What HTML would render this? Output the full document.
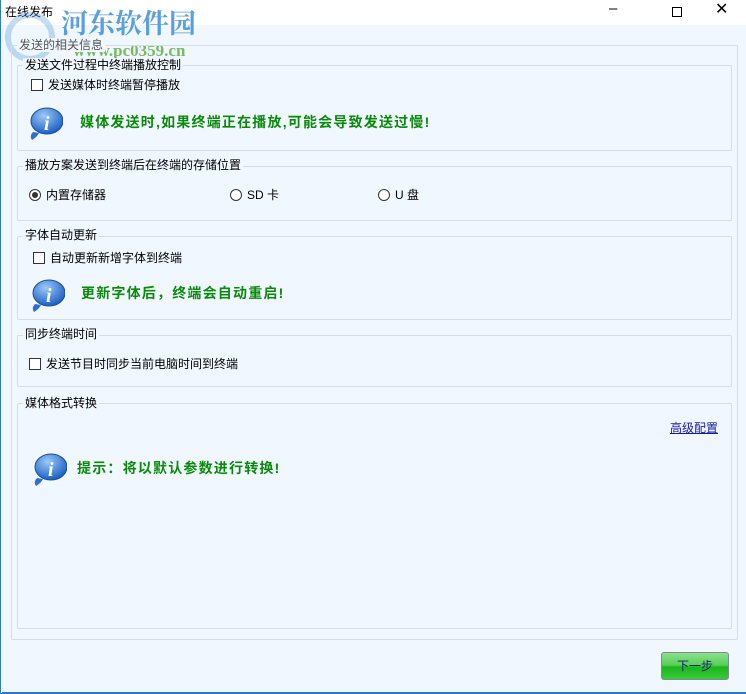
<!DOCTYPE html>
<html><head><meta charset="utf-8"><style>
*{margin:0;padding:0;box-sizing:border-box}
body{width:746px;height:694px;overflow:hidden;background:#fff;font-family:"Liberation Sans","Noto Sans CJK SC",sans-serif;font-size:12px;color:#000;position:relative}
.win{position:absolute;left:0;top:0;width:746px;height:694px;border:1px solid #2a7ad2;border-top:none}
.title{position:absolute;left:0;top:0;width:746px;height:25px;background:#fff}
.client{position:absolute;left:1px;top:25px;width:744px;height:668px;background:#f0f7fe;border-bottom:1px solid #2a7ad2}
.box{position:absolute;border:1px solid #d8dde2;border-radius:2px}
.lbl{position:absolute;background:#f0f7fe;padding:0 2px;line-height:14px;white-space:nowrap}
.a{position:absolute;white-space:nowrap;line-height:14px}
.cb{display:inline-block;width:12px;height:12px;border:1px solid #333;background:#fff;vertical-align:-2px;margin-right:5px}
.rb{display:inline-block;width:12px;height:12px;border:1px solid #333;border-radius:50%;background:#fff;vertical-align:-2px;margin-right:5px;position:relative}
.rb.on:after{content:"";position:absolute;left:2px;top:2px;width:6px;height:6px;border-radius:50%;background:#333}
.g{color:#0a8a0a;font-weight:bold;font-size:14px;letter-spacing:1.2px}
.info{position:absolute;width:34px;height:36px}
</style></head><body>
<div class="win">
<div class="title"></div>
<div class="a" style="left:4px;top:5px">在线发布</div>
<div class="a" style="left:608px;top:2px;font-size:15px">&#x2013;</div>
<div style="position:absolute;left:671px;top:7px;width:10px;height:10px;border:1px solid #000"></div>
<div class="a" style="left:714px;top:3px;font-size:16px">✕</div>
<div class="client"></div>
<div class="a" style="left:60px;top:8px;font-size:27px;line-height:32px;font-weight:bold;color:#3f8fd8;opacity:.85;font-family:'Liberation Serif','Noto Serif CJK SC',serif">河东软件园</div>
<div class="a" style="left:72px;top:44px;font-size:17px;font-weight:bold;color:#5cab3b;opacity:.8;font-family:'Liberation Serif',serif">www.pc0359.cn</div>
<div style="position:absolute;left:4px;top:12px;width:50px;height:50px;border-radius:50%;border:6px solid #5a9ede;opacity:.35"></div>

<div class="box" style="left:10px;top:45px;width:727px;height:595px"></div>
<div class="lbl" style="left:16px;top:38px;color:#555">发送的相关信息</div>

<div class="box" style="left:16px;top:65px;width:715px;height:86px"></div>
<div class="lbl" style="left:22px;top:58px">发送文件过程中终端播放控制</div>
<div class="a" style="left:30px;top:78px"><span class="cb"></span>发送媒体时终端暂停播放</div>
<svg class="info" style="left:28px;top:106px" viewBox="0 0 34 36"><defs><radialGradient id="gr" cx=".4" cy=".3" r=".7"><stop offset="0" stop-color="#9ccaf7"/><stop offset="1" stop-color="#1b5fc4"/></radialGradient></defs><path d="M4 26 Q0 30 3 34 Q8 31 10 27Z" fill="#2e6fcf"/><ellipse cx="18" cy="15" rx="16" ry="13" fill="url(#gr)" stroke="#1a4e9e"/><text x="15" y="24" font-family="Liberation Serif" font-style="italic" font-weight="bold" font-size="20" fill="#fff">i</text></svg>
<div class="a g" style="left:79px;top:115px">媒体发送时,如果终端正在播放,可能会导致发送过慢!</div>

<div class="box" style="left:16px;top:166px;width:715px;height:55px"></div>
<div class="lbl" style="left:22px;top:158px">播放方案发送到终端后在终端的存储位置</div>
<div class="a" style="left:28px;top:188px"><span class="rb on"></span>内置存储器</div>
<div class="a" style="left:229px;top:188px"><span class="rb"></span>SD 卡</div>
<div class="a" style="left:377px;top:188px"><span class="rb"></span>U 盘</div>

<div class="box" style="left:16px;top:236px;width:715px;height:84px"></div>
<div class="lbl" style="left:22px;top:228px">字体自动更新</div>
<div class="a" style="left:32px;top:251px"><span class="cb"></span>自动更新新增字体到终端</div>
<svg class="info" style="left:30px;top:278px" viewBox="0 0 34 36"><path d="M4 26 Q0 30 3 34 Q8 31 10 27Z" fill="#2e6fcf"/><ellipse cx="18" cy="15" rx="16" ry="13" fill="url(#gr)" stroke="#1a4e9e"/><text x="15" y="24" font-family="Liberation Serif" font-style="italic" font-weight="bold" font-size="20" fill="#fff">i</text></svg>
<div class="a g" style="left:80px;top:286px">更新字体后，终端会自动重启!</div>

<div class="box" style="left:16px;top:335px;width:715px;height:52px"></div>
<div class="lbl" style="left:22px;top:327px">同步终端时间</div>
<div class="a" style="left:28px;top:357px"><span class="cb"></span>发送节目时同步当前电脑时间到终端</div>

<div class="box" style="left:16px;top:403px;width:715px;height:226px"></div>
<div class="lbl" style="left:22px;top:396px">媒体格式转换</div>
<div class="a" style="left:669px;top:421px;color:#1a1aa8;text-decoration:underline">高级配置</div>
<svg class="info" style="left:32px;top:452px" viewBox="0 0 34 36"><path d="M4 26 Q0 30 3 34 Q8 31 10 27Z" fill="#2e6fcf"/><ellipse cx="18" cy="15" rx="16" ry="13" fill="url(#gr)" stroke="#1a4e9e"/><text x="15" y="24" font-family="Liberation Serif" font-style="italic" font-weight="bold" font-size="20" fill="#fff">i</text></svg>
<div class="a g" style="left:76px;top:461px">提示：将以默认参数进行转换!</div>

<div style="position:absolute;left:660px;top:652px;width:68px;height:28px;border:1px solid #7a8c9a;border-radius:3px;background:linear-gradient(#8ae08a 0%,#5bd05b 45%,#1ab81a 55%,#3cc83c 100%);text-align:center;line-height:26px;color:#1a1a7a">下一步</div>
</div>
</body></html>
